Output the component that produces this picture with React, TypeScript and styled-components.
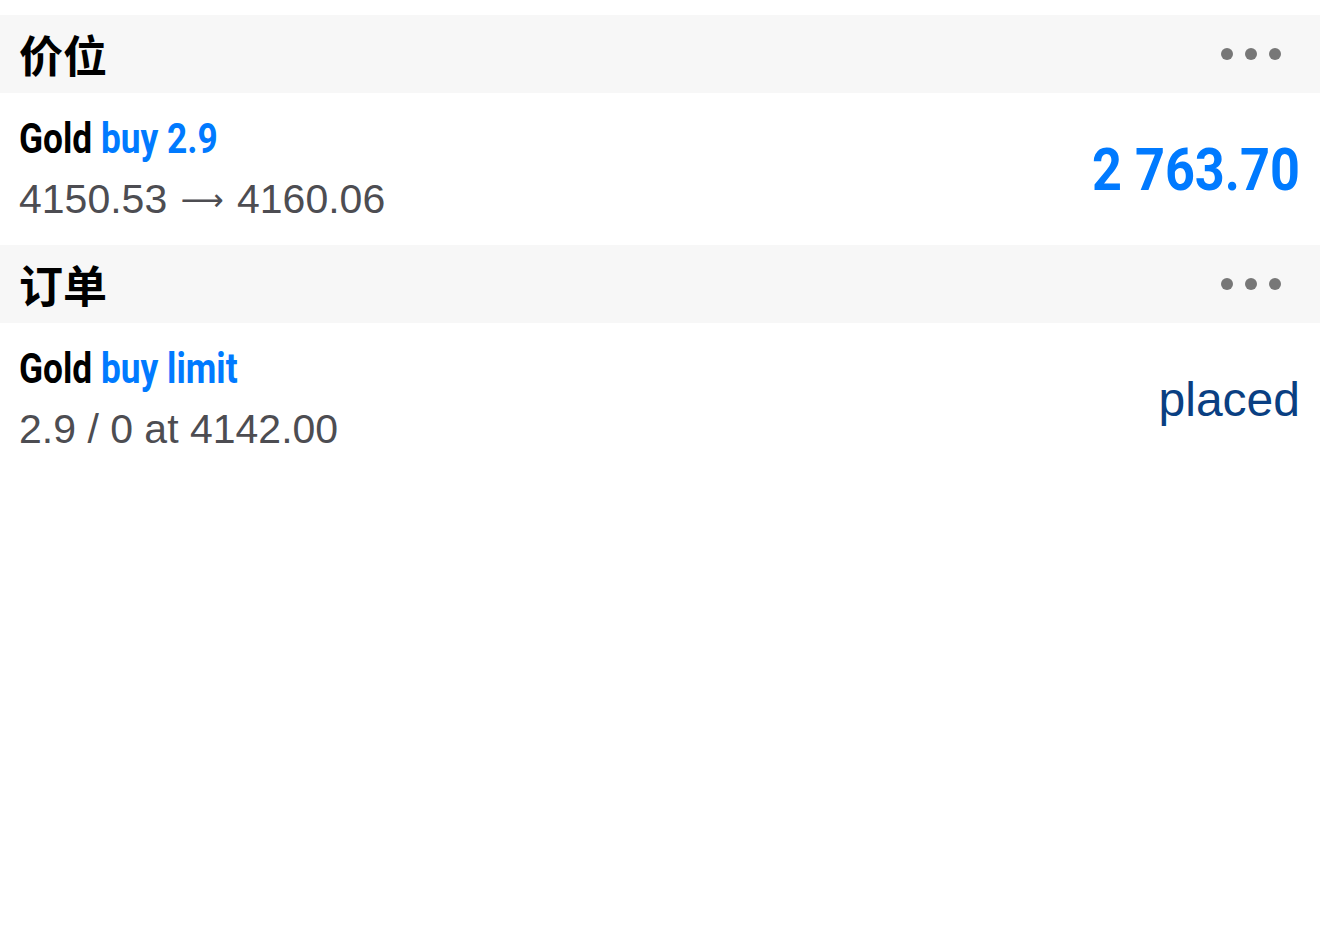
import React from "react";
import styled, { createGlobalStyle } from "styled-components";

const GlobalStyle = createGlobalStyle`
  html, body {
    margin: 0;
    padding: 0;
    background: #ffffff;
  }
`;

const Page = styled.div`
  padding-top: 15px;
  width: 1320px;
  font-family: "Liberation Sans", Arial, sans-serif;
`;

const SectionHeader = styled.div`
  height: 78px;
  background: #f7f7f7;
  display: flex;
  align-items: center;
  justify-content: space-between;
  padding: 0 39px 0 19px;
`;

const SectionTitle = styled.div`
  font-family: "Noto Sans CJK SC", "Noto Sans", sans-serif;
  font-weight: 700;
  font-size: 44px;
  line-height: 1;
  color: #000;
`;

const Dots = styled.div`
  display: flex;
  gap: 12px;
`;

const Dot = styled.span`
  width: 12px;
  height: 12px;
  border-radius: 50%;
  background: #777777;
`;

const Row = styled.div`
  height: 152px;
  display: flex;
  align-items: center;
  justify-content: space-between;
  padding: 0 20px 0 19px;
`;

const Info = styled.div`
  display: flex;
  flex-direction: column;
`;

/* condensed face: squeeze Roboto bold horizontally */
const Title = styled.div`
  font-family: Roboto, "Liberation Sans", sans-serif;
  font-weight: 700;
  font-size: 42px;
  line-height: 60px;
  color: #000;
  white-space: nowrap;
  transform: scaleX(0.84);
  transform-origin: left center;
`;

const Accent = styled.span`
  color: #007aff;
`;

const Detail = styled.div`
  font-size: 41px;
  line-height: 60px;
  height: 60px;
  color: #4d4d52;
  white-space: nowrap;
`;

const Arrow = styled.span`
  font-family: "DejaVu Sans", sans-serif;
  font-size: 30px;
  line-height: 1;
  vertical-align: 3px;
  margin: 0 2px;
`;

const Amount = styled.div`
  font-family: Roboto, "Liberation Sans", sans-serif;
  font-weight: 700;
  font-size: 60px;
  color: #007aff;
  white-space: nowrap;
  transform: scaleX(0.87);
  transform-origin: right center;
`;

const Status = styled.div`
  font-size: 48px;
  color: #0a3f82;
`;

const Header = ({ title }: { title: string }) => (
  <SectionHeader>
    <SectionTitle>{title}</SectionTitle>
    <Dots>
      <Dot />
      <Dot />
      <Dot />
    </Dots>
  </SectionHeader>
);

const App: React.FC = () => {
  return (
    <>
      <GlobalStyle />
      <Page>
        <Header title="价位" />
        <Row>
          <Info>
            <Title>
              Gold <Accent>buy 2.9</Accent>
            </Title>
            <Detail>
              4150.53 <Arrow>⟶</Arrow> 4160.06
            </Detail>
          </Info>
          <Amount>2 763.70</Amount>
        </Row>
        <Header title="订单" />
        <Row>
          <Info>
            <Title>
              Gold <Accent>buy limit</Accent>
            </Title>
            <Detail>2.9 / 0 at 4142.00</Detail>
          </Info>
          <Status>placed</Status>
        </Row>
      </Page>
    </>
  );
};

export default App;
